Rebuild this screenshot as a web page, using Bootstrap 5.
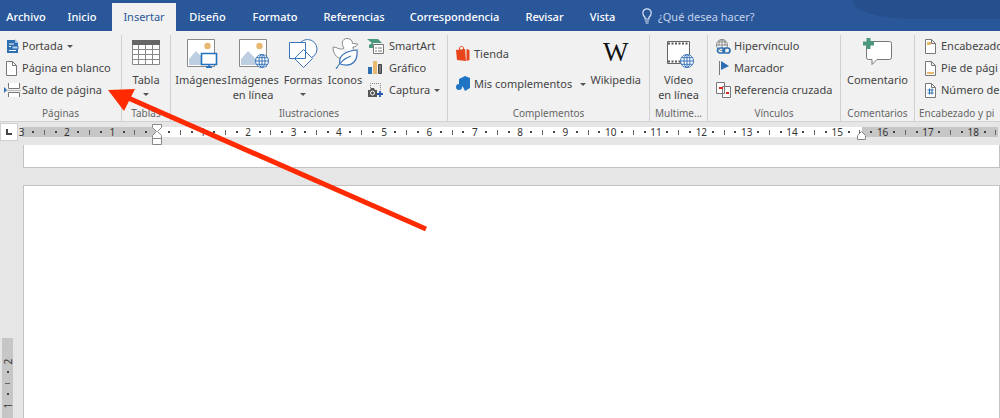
<!DOCTYPE html>
<html lang="es">
<head>
<meta charset="utf-8">
<meta name="viewport" content="width=device-width, initial-scale=1">
<title>Procesador de textos</title>
<link rel="stylesheet" href="https://cdn.jsdelivr.net/npm/bootstrap@5.3.0/dist/css/bootstrap.min.css">
<style>
html,body{height:100%}
body{font-family:"Noto Sans","Open Sans",sans-serif;font-size:11px;line-height:16px;color:#444;background:#e6e6e6;overflow:hidden}
button{font:inherit;color:inherit;background:none;border:0;padding:0}
.tabbar{background:#2a579a;height:31px;padding-top:3px}
.tabstrip{display:grid;grid-template-columns:52px 60px 64px 63px 72px 86px 115px 65px 51px;flex:none}
.tab{color:#fff;height:28px;padding:5px 0 0;text-align:center;text-decoration:none;white-space:nowrap;font-weight:500;line-height:18px}
.tab.on{background:#f1f1f1;color:#2a579a;font-weight:400}
.tell{color:#c3d3ea;margin-left:14px;padding-top:5px;gap:6px;line-height:18px}
.shade{position:absolute;right:0;top:0;width:148px;height:19px;background:#254f8a;border-bottom-left-radius:60px 19px;opacity:.8}
.ribbon{background:#f1f1f1;display:grid;grid-template-columns:122px 49px 277px 202px 58px 133px 74px minmax(85px,1fr);height:91px;border-bottom:1px solid #d2d2d2;overflow:hidden}
.grp{display:flex;flex-direction:column;min-width:0;border-right:1px solid #d0d0d0;margin:4px 0}
.grp:last-child{border:0}
.tools{display:flex;height:66px;flex:none}
.cap{text-align:center;color:#666;margin-top:4px;font-size:10px;line-height:16px;white-space:nowrap}
.stack{display:flex;flex-direction:column}
.cmd{display:flex;align-items:center;height:22px;text-align:left;white-space:nowrap}
.cmd svg,.big svg{flex:none;display:block}
.cmd svg{width:18px;height:18px}
.big{display:flex;flex-direction:column;align-items:center;line-height:15px;white-space:nowrap;flex:none}
.big svg.pic{width:36px;height:34px;margin-bottom:3px}
.w36{width:36px}.w48{width:48px}.w52{width:52px}
.arr{width:0;height:0;border:3px solid transparent;border-top-color:#555;border-bottom:0;margin-left:4px;display:inline-block}
.big .arr{margin:6px 0 0}
.wiki{font:27px/34px "Liberation Serif",serif;color:#111;height:37px}
.rulerrow{display:flex;height:20px;align-items:center;flex:none}
.tabsel{width:18px;height:18px;background:#fff;border:1px solid #d0d0d0;display:flex;align-items:center;justify-content:center;flex:none}
.hruler{position:relative;flex:1;margin:0 2px 0 4px;height:10px;background:linear-gradient(90deg,#c6c6c6 13.8%,#fff 13.8%,#fff 86.1%,#c6c6c6 86.1%)}
.marks{display:flex;margin:0 -3px 0 -6px;height:10px}
.marks span,.vmarks span{flex:1 1 0;min-width:0;display:flex;align-items:center;justify-content:center;font-size:10px;line-height:10px;color:#333}
.pt::before{content:"";width:2px;height:2px;background:#444}
.bar::before{content:"";width:1px;height:5px;background:#666}
.pin{position:absolute;top:-3px}
.prev{height:23px;background:#fff;border:1px solid #c2c2c2;border-top:0;margin:3px 0 17px 23px;flex:none}
.vcol{width:23px;flex:none;display:flex;flex-direction:column;justify-content:flex-end;padding-left:2px}
.vmarks{width:11px;height:80px;background:#c6c6c6;display:flex;flex-direction:column;padding-top:18px}
.vmarks span{flex:0 0 11px;transform:rotate(-90deg)}
.sheet{background:#fff;border:1px solid #c2c2c2;border-bottom:0}
.pointer{position:absolute;left:0;top:0;pointer-events:none}
</style>
</head>
<body class="d-flex flex-column position-relative">
<svg width="0" height="0" class="position-absolute" aria-hidden="true">
<defs>
<g id="photo"><path d="M2.500 5.500h27v27h-27z" fill="#fff" stroke="#888"/><circle cx="22.500" cy="12" r="3.200" fill="#e9b870"/><path d="M4 31V25l7-8 9 9v5z" fill="#bdcde2"/></g>
<g id="globe" fill="#fff" stroke="#3b74b9"><circle cx="7" cy="7" r="6.500"/><ellipse cx="7" cy="7" rx="3" ry="6.500"/><path d="M7 .5v13M.5 7h13M1.500 3.700h11M1.500 10.300h11" fill="none"/></g>
<path id="leaf" d="M3.500 2.500h6l4 4v10h-10zM9.500 2.500v4h4" fill="#fff" stroke="#777"/>
</defs>
</svg>

<header class="tabbar d-flex position-relative flex-shrink-0">
<div class="shade"></div>
<nav class="tabstrip">
<a class="tab" href="#">Archivo</a><a class="tab" href="#">Inicio</a><a class="tab on" href="#" aria-current="page">Insertar</a><a class="tab" href="#">Diseño</a><a class="tab" href="#">Formato</a><a class="tab" href="#">Referencias</a><a class="tab" href="#">Correspondencia</a><a class="tab" href="#">Revisar</a><a class="tab" href="#">Vista</a>
</nav>
<button class="tell d-flex align-items-start text-nowrap"><svg width="10" height="16" viewBox="0 0 10 16" fill="none" stroke="#dce6f5" stroke-width="1.200"><path d="M3 11V9.200C1.500 8 .8 6.800.8 5a4.200 4.200 0 0 1 8.400 0c0 1.800-.7 3-2.200 4.200V11zM3 13h4M3.500 15h3"/></svg><span>¿Qué desea hacer?</span></button>
</header>

<main class="ribbon flex-shrink-0">
<section class="grp"><div class="tools stack ps-1">
<button class="cmd"><svg viewBox="0 0 18 18"><path d="M3 3h8l3 3v10H3z" fill="#2d6fb0"/><path d="M11 2v4h4" fill="#9ebfe0"/><path d="M5 7h5M5 9.500h2M5 13.500h7" stroke="#fff"/><path d="M8 9h6v3H8z" fill="#b7d1ec" stroke="#2d6fb0"/></svg>Portada<i class="arr"></i></button>
<button class="cmd"><svg viewBox="0 0 18 18"><use href="#leaf" x="-1"/></svg>Página en blanco</button>
<button class="cmd"><svg viewBox="0 0 18 18"><path d="M4.500 2v5.500h11V2M4.500 16v-4.500h11V16" fill="#fff" stroke="#777"/><path d="M0 6l3 3-3 3z" fill="#2d6fb0"/><path d="M3 9.500h14" stroke="#bbb"/></svg>Salto de página</button>
</div><div class="cap">Páginas</div></section>

<section class="grp"><div class="tools justify-content-center">
<button class="big"><svg class="pic" viewBox="0 0 36 34"><path d="M4.500 6.500h27v23h-27z" fill="#fff" stroke="#888"/><path d="M4 5h28v5H4z" fill="#666"/><path d="M4.500 14.500h27M4.500 19.500h27M4.500 24.500h27M10.500 10v20M17.500 10v20M24.500 10v20" stroke="#888"/></svg>Tabla<i class="arr"></i></button>
</div><div class="cap">Tablas</div></section>

<section class="grp"><div class="tools ps-1">
<button class="big w52"><svg class="pic" viewBox="0 0 36 34"><use href="#photo" x="2" y="-1"/><path d="M18.500 18.500h15v11h-15z" fill="#fff" stroke="#2472bc" stroke-width="1.600"/><path d="M23 32.500l3-2 3 2z" fill="#2472bc" stroke="#2472bc"/></svg>Imágenes</button>
<button class="big w52"><svg class="pic" viewBox="0 0 36 34"><use href="#photo" x="2" y="-1"/><use href="#globe" x="20" y="19"/></svg>Imágenes<br>en línea</button>
<button class="big w48"><svg class="pic" viewBox="0 0 36 34"><g fill="#fff" stroke="#3b74b9"><circle cx="22.500" cy="14" r="9.500"/><path d="M4.500 7.500h16v16h-16zM18.500 14.500l9 9-9 9-9-9z"/></g></svg>Formas<i class="arr"></i></button>
<button class="big w36"><svg class="pic" viewBox="0 0 36 34"><path d="M17 13C14 9 15 3.500 20 3.500c3.500 0 5.500 2 5.500 5l5 .5c-.5 2-2 3-4.500 3-1 3 4 3 3 9M17 13c-3 3-7-1-11-1 0 6 3 11 9 12" fill="#fff" stroke="#888"/><path d="M13 29c-2-8 5-13 17-14 1 10-4 18-17 14M9 34c4-7 9-11 15-13" fill="#fff" stroke="#3b74b9" stroke-width="1.200"/></svg>Iconos</button>
<div class="stack ms-1">
<button class="cmd"><svg viewBox="0 0 18 18"><path d="M0 2h11l4 4H6v5H2V8l3-2z" fill="#4c987e"/><path d="M6.500 7.500h10v9h-10z" fill="#fff" stroke="#777"/><path d="M8 11h2m1 0h4M8 14h2m1 0h4" stroke="#777"/></svg><span class="ps-1">SmartArt</span></button>
<button class="cmd"><svg viewBox="0 0 18 18"><path d="M1 8h4v7H1z" fill="#2d6fb0"/><path d="M6 2h4v13H6z" fill="#e9b870"/><path d="M11.500 5.500h3v9h-3z" fill="#777" stroke="#444"/></svg><span class="ps-1">Gráfico</span></button>
<button class="cmd"><svg viewBox="0 0 18 18"><path d="M3.500 7V2.500h10V11" fill="none" stroke="#888" stroke-dasharray="1 1"/><path d="M1 9h2l1-2h3l1 2h2v7H1z" fill="#555"/><circle cx="5.500" cy="12" r="2" fill="none" stroke="#fff"/><path d="M10 13h6M13 10v6" stroke="#2856ad" stroke-width="1.800"/></svg><span class="ps-1">Captura</span><i class="arr"></i></button>
</div></div><div class="cap">Ilustraciones</div></section>

<section class="grp"><div class="tools justify-content-between ps-1">
<div class="stack pt-2 ps-1 gap-2">
<button class="cmd"><svg viewBox="0 0 18 18"><path d="M0 5l9-1 1 12-9-1zM10.500 4l3 1v10l-3 1z" fill="#e8441c"/><path d="M3.500 5V3c0-2 4-2 4 0v2" fill="none" stroke="#e8441c"/></svg>Tienda</button>
<button class="cmd"><svg viewBox="0 0 18 18"><path d="M3 4l6-3 5 2v10l-5 3-2-4-4-3z" fill="#1f75c4"/><circle cx="3" cy="12" r="3" fill="#1f75c4"/></svg>Mis complementos<i class="arr ms-2"></i></button>
</div>
<button class="big me-2"><span class="wiki">W</span>Wikipedia</button>
</div><div class="cap">Complementos</div></section>

<section class="grp"><div class="tools justify-content-center">
<button class="big"><svg class="pic" viewBox="0 0 36 34"><path d="M6.500 6.500h22v22h-22z" fill="#fff" stroke="#666"/><path d="M7 8.500h21M7 26.500h21" stroke="#555" stroke-width="2" stroke-dasharray="2 1.500"/><use href="#globe" x="19" y="19"/></svg>Vídeo<br>en línea</button>
</div><div class="cap">Multime...</div></section>

<section class="grp"><div class="tools stack ps-2">
<button class="cmd"><svg viewBox="0 0 18 18"><circle cx="6" cy="8" r="5.500" fill="#fff" stroke="#888"/><path d="M6 2.500v9M.5 8h11M2 5h8M3 9V5c1-3 5-3 6 0v4" fill="none" stroke="#888"/><rect x="1.500" y="11" width="7" height="5" rx="2.500" fill="none" stroke="#2d6fb0" stroke-width="1.700"/><rect x="7" y="11" width="7" height="5" rx="2.500" fill="none" stroke="#2d6fb0" stroke-width="1.700"/></svg>Hipervínculo</button>
<button class="cmd"><svg viewBox="0 0 18 18"><path d="M3.500 2v14" stroke="#777"/><path d="M5 2l8 5-8 4z" fill="#2d6fb0"/></svg>Marcador</button>
<button class="cmd"><svg viewBox="0 0 18 18"><path d="M6.500 5.500h8v11h-8zM.5 1.500h8v11h-8z" fill="#fff" stroke="#777"/><path d="M3 7h4M10 12h3" stroke="#e2231a" stroke-width="2"/></svg>Referencia cruzada</button>
</div><div class="cap">Vínculos</div></section>

<section class="grp"><div class="tools justify-content-center">
<button class="big"><svg class="pic" viewBox="0 0 36 34"><path d="M7.500 8.500q0-2 2-2h21q2 0 2 2v14q0 2-2 2H18l-5 5v-5H9.500q-2 0-2-2z" fill="#fff" stroke="#777"/><path d="M4 8.500h11M9.500 3v11" stroke="#4c987e" stroke-width="4"/></svg>Comentario</button>
</div><div class="cap">Comentarios</div></section>

<section class="grp"><div class="tools stack ps-2">
<button class="cmd"><svg viewBox="0 0 18 18"><use href="#leaf" x="-1"/><path d="M4 5h4v3H4z" fill="#e9b870"/></svg>Encabezado</button>
<button class="cmd"><svg viewBox="0 0 18 18"><use href="#leaf" x="-1"/><path d="M4 13h7v2H4z" fill="#e9b870"/></svg>Pie de pági</button>
<button class="cmd"><svg viewBox="0 0 18 18"><use href="#leaf" x="-1"/><path d="M4.500 9h6M4.500 12h6M6.500 7.500v6M9 7.500v6" stroke="#2d6fb0"/></svg>Número de</button>
</div><div class="cap text-start ps-1">Encabezado y pi</div></section>
</main>

<div class="rulerrow">
<button class="tabsel" aria-label="Tipo de tabulación"><svg width="8" height="8"><path d="M2 1v5h5" fill="none" stroke="#444" stroke-width="2"/></svg></button>
<div class="hruler"><div class="marks" id="hmarks"></div>
<svg class="pin" style="left:13.300%" width="10" height="22"><path d="M.5.500h9v3L5.500 7.500l4 4v3h-9v-3l4-4-4-4zM.5 14.500h9v6h-9z" fill="#fff" stroke="#888"/></svg>
<svg class="pin" style="left:85.600%" width="10" height="16"><path d="M.5 15.500v-4l4-4 4 4v4z" fill="#fff" stroke="#888"/></svg>
</div></div>
<div class="prev"></div>
<div class="d-flex flex-grow-1 overflow-hidden">
<aside class="vcol"><div class="vmarks"><span>2</span><span class="pt"></span><span class="bar"></span><span class="pt"></span><span>1</span></div></aside>
<article class="sheet flex-grow-1"></article>
</div>
<svg class="pointer" width="440" height="240" aria-hidden="true"><path d="M126 97L426 229" stroke="#ff2a00" stroke-width="5"/><path d="M108 90l27-1-11 22z" fill="#ff2a00"/></svg>
<script src="https://cdn.jsdelivr.net/npm/bootstrap@5.3.0/dist/js/bootstrap.bundle.min.js"></script>
<script>
// Four marks per centimetre: number, dot, half bar, dot; zero stays blank.
const marks = document.getElementById('hmarks');
for (let q = -12; q <= 74; q++) {
  const s = document.createElement('span'), r = ((q % 4) + 4) % 4;
  if (r === 0) { if (q) s.textContent = Math.abs(q / 4); }
  else s.className = r === 2 ? 'bar' : 'pt';
  marks.append(s);
}
</script>
</body>
</html>
